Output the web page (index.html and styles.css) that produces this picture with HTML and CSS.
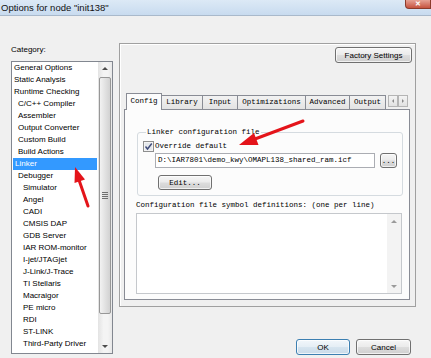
FILE: index.html
```html
<!DOCTYPE html>
<html lang="en">

<head>
  <meta charset="UTF-8" />
  <title>Options for node "init138"</title>
  <link rel="stylesheet" href="styles.css">
</head>

<body>
  <div class="window">
    <div class="titlebar">
      <span class="title">Options for node "init138"</span>
      <span class="close">&#x2715;</span>
    </div>

    <div class="main">
      <div class="category">
        <div class="cat-label">Category:</div>
        <div class="cat-list">
          <ul class="items">
            <li class="l0">General Options</li>
            <li class="l0">Static Analysis</li>
            <li class="l0">Runtime Checking</li>
            <li class="l1">C/C++ Compiler</li>
            <li class="l1">Assembler</li>
            <li class="l1">Output Converter</li>
            <li class="l1">Custom Build</li>
            <li class="l1">Build Actions</li>
            <li class="l1 sel">Linker</li>
            <li class="l1">Debugger</li>
            <li class="l2">Simulator</li>
            <li class="l2">Angel</li>
            <li class="l2">CADI</li>
            <li class="l2">CMSIS DAP</li>
            <li class="l2">GDB Server</li>
            <li class="l2">IAR ROM-monitor</li>
            <li class="l2">I-jet/JTAGjet</li>
            <li class="l2">J-Link/J-Trace</li>
            <li class="l2">TI Stellaris</li>
            <li class="l2">Macraigor</li>
            <li class="l2">PE micro</li>
            <li class="l2">RDI</li>
            <li class="l2">ST-LINK</li>
            <li class="l2">Third-Party Driver</li>
          </ul>
          <div class="vscroll">
            <div class="sb-btn"><span class="tri-up"></span></div>
            <div class="thumb"><span class="grip"></span></div>
            <div class="sb-space"></div>
            <div class="sb-btn"><span class="tri-down"></span></div>
          </div>
        </div>
      </div>

      <div class="settings">
        <div class="panel">
          <div class="panel-top">
            <button class="btn factory">Factory Settings</button>
          </div>

          <div class="tabctl">
            <div class="tabs">
              <div class="tab active w-config">Config</div>
              <div class="tab w-library">Library</div>
              <div class="tab w-input">Input</div>
              <div class="tab w-opt">Optimizations</div>
              <div class="tab w-adv">Advanced</div>
              <div class="tab w-output">Output</div>
              <div class="tab-scroll">
                <span class="ts-btn"><span class="tri-left"></span></span>
                <span class="ts-btn"><span class="tri-right"></span></span>
              </div>
            </div>

            <div class="tab-body">
              <fieldset class="group">
                <legend>Linker configuration file</legend>
                <div class="check-row">
                  <svg class="checkbox" width="11" height="11" viewBox="0 0 11 11">
                    <rect x="0.5" y="0.5" width="10" height="10" fill="#f4f4f4" stroke="#8e8f8f" />
                    <rect x="2" y="2" width="7" height="7" fill="#e4e8ec" />
                    <path d="M2.5 5.5 L4.5 8 L8.8 2.5" fill="none" stroke="#3f4b7a" stroke-width="1.4" />
                  </svg>
                  <span>Override default</span>
                </div>
                <div class="path-row">
                  <div class="field">D:\IAR7801\demo_kwy\OMAPL138_shared_ram.icf</div>
                  <button class="btn dots">...</button>
                </div>
                <button class="btn edit">Edit...</button>
              </fieldset>

              <div class="sym-label">Configuration file symbol definitions: (one per line)</div>
              <div class="sym-box">
                <div class="sym-text"></div>
                <div class="sym-scroll">
                  <span class="tri-up light"></span>
                  <span class="tri-down light"></span>
                </div>
              </div>
            </div>
          </div>
        </div>

        <div class="dialog-buttons">
          <button class="btn default ok">OK</button>
          <button class="btn cancel">Cancel</button>
        </div>
      </div>
    </div>

    <!-- red annotation arrows drawn over the dialog -->
    <svg class="arrows" width="431" height="358" viewBox="0 0 431 358">
      <line x1="88" y1="206" x2="79" y2="180" stroke="#e4141a" stroke-width="3" stroke-linecap="round" />
      <polygon points="75,167 85,179.5 74.5,183" fill="#e4141a" />
      <line x1="303" y1="121" x2="255" y2="139" stroke="#e4141a" stroke-width="3" stroke-linecap="round" />
      <polygon points="239,145 254,133 258.5,145" fill="#e4141a" />
    </svg>
  </div>
</body>

</html>
```

FILE: styles.css
```css
* {
  box-sizing: border-box;
  margin: 0;
  padding: 0;
}

body {
  background: #f0f0f0;
  font-family: 'Liberation Sans', Arial, sans-serif;
  font-size: 8px;
  color: #000;
  width: 431px;
  height: 358px;
  overflow: hidden;
}

.window {
  position: relative;
  width: 431px;
  height: 358px;
}

/* title bar */
.titlebar {
  display: flex;
  height: 16px;
  background: linear-gradient(to bottom, #dce9f6, #c8dbef);
  border-bottom: 1px solid #a9b9cb;
}

.title {
  font-size: 9.5px;
  line-height: 15px;
  padding-left: 1px;
  color: #111;
}

.close {
  margin-left: auto;
  width: 26px;
  height: 9px;
  background: linear-gradient(to bottom, #e6a194, #c6533f);
  border: 1px solid #8b3b2c;
  border-top: none;
  border-radius: 0 0 0 4px;
  color: #fff;
  font-size: 7px;
  line-height: 8px;
  text-align: center;
  font-weight: bold;
}

/* main area */
.main {
  display: flex;
  gap: 6px;
  padding: 27px 0 0 11px;
}

.category {
  width: 102px;
}

.cat-label {
  margin-top: 1px;
  line-height: 12px;
}

.cat-list {
  display: flex;
  margin-top: 5px;
  height: 293px;
  background: #fff;
  border: 1px solid #828790;
}

.items {
  list-style: none;
  flex: 1;
}

.items li {
  height: 12px;
  line-height: 12px;
  white-space: nowrap;
}

.items .l0 {
  padding-left: 2px;
}

.items .l1 {
  padding-left: 6px;
}

.items .l2 {
  padding-left: 11px;
}

.items .sel {
  margin: 0 1px;
  padding-left: 2px;
  background: #3399ff;
  color: #fff;
}

/* category scrollbar */
.vscroll {
  width: 14px;
  display: flex;
  flex-direction: column;
  background: linear-gradient(to right, #e3e3e3, #f4f4f4 40%, #f4f4f4 70%, #e8e8e8);
}

.sb-btn {
  height: 13px;
  display: flex;
  align-items: center;
  justify-content: center;
}

.thumb {
  margin: 2px 1px 0;
  height: 237px;
  border: 1px solid #979797;
  border-radius: 2px;
  background: linear-gradient(to right, #f2f2f2, #e2e2e2 50%, #d2d2d2);
  display: flex;
  align-items: center;
  justify-content: center;
}

.grip {
  width: 6px;
  height: 7px;
  background: repeating-linear-gradient(to bottom, #6f6f6f 0 1px, transparent 1px 2px);
}

.sb-space {
  flex: 1;
}

.tri-up {
  border-left: 3px solid transparent;
  border-right: 3px solid transparent;
  border-bottom: 3px solid #4d4d4d;
}

.tri-down {
  border-left: 3px solid transparent;
  border-right: 3px solid transparent;
  border-top: 3px solid #4d4d4d;
}

.tri-up.light {
  border-bottom-color: #9a9a9a;
}

.tri-down.light {
  border-top-color: #9a9a9a;
}

.tri-left {
  border-top: 2px solid transparent;
  border-bottom: 2px solid transparent;
  border-right: 2px solid #8a8a8a;
}

.tri-right {
  border-top: 2px solid transparent;
  border-bottom: 2px solid transparent;
  border-left: 2px solid #8a8a8a;
}

/* right side */
.settings {
  width: 297px;
}

.panel {
  height: 264px;
  border: 1px solid #a0a0a0;
  box-shadow: inset 1px 1px #fff;
}

.panel-top {
  display: flex;
  justify-content: flex-end;
  padding: 3px 3px 0;
}

.btn {
  font-family: 'Liberation Sans', Arial, sans-serif;
  font-size: 8px;
  color: #000;
  border: 1px solid #707070;
  border-radius: 3px;
  background: linear-gradient(to bottom, #f6f6f6, #ebebeb 48%, #dddddd 52%, #cfcfcf);
  box-shadow: inset 0 0 0 1px rgba(255, 255, 255, 0.7);
  cursor: pointer;
}

.factory {
  width: 77px;
  height: 16px;
}

.tabctl {
  margin: 30px 0 0 4px;
}

.tabs {
  display: flex;
  align-items: flex-end;
  padding-left: 2px;
  height: 16px;
  font-family: 'Liberation Mono', 'Courier New', monospace;
  font-size: 7.5px;
}

.tab {
  height: 14px;
  line-height: 13px;
  text-align: center;
  border: 1px solid #898c95;
  border-bottom: none;
  border-left: none;
  background: linear-gradient(to bottom, #f2f2f2, #e3e3e3);
}

.tab.active {
  height: 17px;
  margin-bottom: -1px;
  line-height: 14px;
  border-left: 1px solid #898c95;
  background: #fcfcfc;
  position: relative;
  z-index: 1;
}

.w-config { width: 36px; }
.w-library { width: 41px; }
.w-input { width: 35px; }
.w-opt { width: 68px; }
.w-adv { width: 44px; }
.w-output { width: 36px; }

.tab-scroll {
  display: flex;
  align-self: flex-start;
  margin: 2px 0 0 2px;
}

.ts-btn {
  width: 10px;
  height: 12px;
  border: 1px solid #b5b5b5;
  background: linear-gradient(to bottom, #f4f4f4, #e2e2e2);
  display: flex;
  align-items: center;
  justify-content: center;
}

.tab-body {
  width: 286px;
  height: 191px;
  border: 1px solid #898c95;
  background: #fcfcfc;
  font-family: 'Liberation Mono', 'Courier New', monospace;
  font-size: 7.5px;
  overflow: hidden;
}

.group {
  margin: 18px 7px 0 12px;
  padding: 3px 5px 5px;
  border: 1px solid #d5dbe0;
  border-radius: 3px;
}

.group legend {
  margin-left: 3px;
  padding: 0 1px;
  line-height: 9px;
}

.check-row {
  display: flex;
  align-items: center;
  height: 12px;
}

.checkbox {
  margin-right: 1px;
}

.path-row {
  display: flex;
  gap: 5px;
  margin: 1px 0 0 12px;
}

.field {
  width: 220px;
  height: 15px;
  line-height: 13px;
  padding-left: 2px;
  background: #fff;
  border: 1px solid #abadb3;
}

.dots {
  width: 17px;
  height: 15px;
  font-family: 'Liberation Mono', 'Courier New', monospace;
  font-size: 7.5px;
  line-height: 10px;
}

.edit {
  display: block;
  margin: 7px 0 0 15px;
  width: 54px;
  height: 15px;
  font-family: 'Liberation Mono', 'Courier New', monospace;
  font-size: 7.5px;
}

.sym-label {
  margin: 3px 0 0 11px;
  line-height: 12px;
}

.sym-box {
  display: flex;
  margin: 2px 0 0 11px;
  width: 266px;
  height: 81px;
  background: #fff;
  border: 1px solid #c5c8cc;
}

.sym-text {
  flex: 1;
}

.sym-scroll {
  width: 14px;
  display: flex;
  flex-direction: column;
  justify-content: space-between;
  align-items: center;
  padding: 6px 0 5px;
  background: #f3f3f3;
}

.dialog-buttons {
  display: flex;
  justify-content: flex-end;
  gap: 6px;
  margin-top: 32px;
  padding-right: 5px;
}

.ok {
  width: 54px;
  height: 16px;
}

.btn.default {
  border-color: #3c7fb1;
  background: linear-gradient(to bottom, #f2f7fb, #e5eef5 48%, #d6e4ef 52%, #c9dbe9);
}

.cancel {
  width: 55px;
  height: 16px;
}

.arrows {
  position: absolute;
  left: 0;
  top: 0;
  pointer-events: none;
}
```
